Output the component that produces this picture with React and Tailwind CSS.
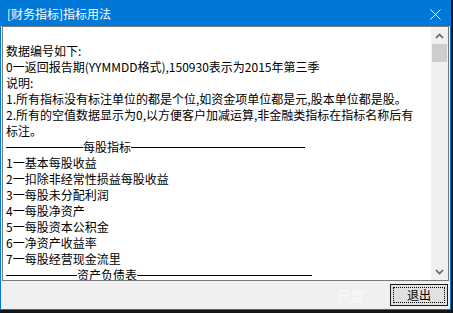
import React from 'react';

const font = { fontFamily: '"Noto Sans CJK SC", "Liberation Sans", sans-serif' };

const lines = [
  '数据编号如下:',
  '0一返回报告期(YYMMDD格式),150930表示为2015年第三季',
  '说明:',
  '1.所有指标没有标注单位的都是个位,如资金项单位都是元,股本单位都是股。',
  '2.所有的空值数据显示为0,以方便客户加减运算,非金融类指标在指标名称后有',
  '标注。',
];

const items = [
  '1一基本每股收益',
  '2一扣除非经常性损益每股收益',
  '3一每股未分配利润',
  '4一每股净资产',
  '5一每股资本公积金',
  '6一净资产收益率',
  '7一每股经营现金流里',
];

function Divider({ left, label, right }) {
  return (
    <div className="flex items-center h-4">
      <div className="h-px bg-black" style={{ width: left }} />
      <span>{label}</span>
      <div className="h-px bg-black" style={{ width: right }} />
    </div>
  );
}

export default function App() {
  return (
    <div className="w-[453px] h-[313px] bg-[#151515] overflow-hidden">
      <div
        className="w-[451px] h-[310px] border border-[#0078d7] bg-[#f0f0f0] flex flex-col relative"
        style={font}
      >
        {/* Title bar */}
        <div className="h-[25px] bg-[#0078d7] flex items-center justify-between pl-[6px] pr-[9px] text-white text-[12px] shrink-0">
          <span>[财务指标]指标用法</span>
          <svg width="11" height="11" viewBox="0 0 11 11" className="mt-px">
            <path d="M0.5 0.5 L10.5 10.5 M10.5 0.5 L0.5 10.5" stroke="#fff" strokeWidth="1" />
          </svg>
        </div>

        {/* Edit box */}
        <div className="ml-px w-[447px] h-[255px] border border-[#7a7a7a] bg-white flex shrink-0">
          <div className="flex-1 overflow-hidden pl-[3px] pt-[16px] text-[12px] leading-4 text-black whitespace-nowrap">
            {lines.map((l, i) => (
              <div key={i} className="h-4">{l}</div>
            ))}
            <Divider left={77} label="每股指标" right={174} />
            {items.map((l, i) => (
              <div key={i} className="h-4">{l}</div>
            ))}
            <Divider left={71} label="资产负债表" right={175} />
          </div>

          {/* Scrollbar */}
          <div className="w-[17px] bg-[#f0f0f0] flex flex-col items-stretch">
            <div className="h-[17px] flex items-center justify-center">
              <svg width="9" height="6" viewBox="0 0 9 6">
                <path d="M1 5 L4.5 1.5 L8 5" stroke="#606060" strokeWidth="1.6" fill="none" />
              </svg>
            </div>
            <div className="mx-[1px] h-[18px] bg-[#cdcdcd]" />
            <div className="flex-1" />
            <div className="h-[17px] flex items-center justify-center">
              <svg width="9" height="6" viewBox="0 0 9 6">
                <path d="M1 1 L4.5 4.5 L8 1" stroke="#606060" strokeWidth="1.6" fill="none" />
              </svg>
            </div>
          </div>
        </div>

        {/* Bottom panel */}
        <div className="flex-1 flex items-center justify-end pr-[2px] relative">
          <span className="absolute left-[336px] top-[4px] text-[14px] text-white/70">尺度</span>
          <button className="w-[58px] h-[22px] border border-[#1a1a1a] bg-[#e1e1e1] p-[2px] text-[12px] text-black">
            <div className="w-full h-full border border-dotted border-black flex items-center justify-center">
              退出
            </div>
          </button>
        </div>
      </div>
    </div>
  );
}
